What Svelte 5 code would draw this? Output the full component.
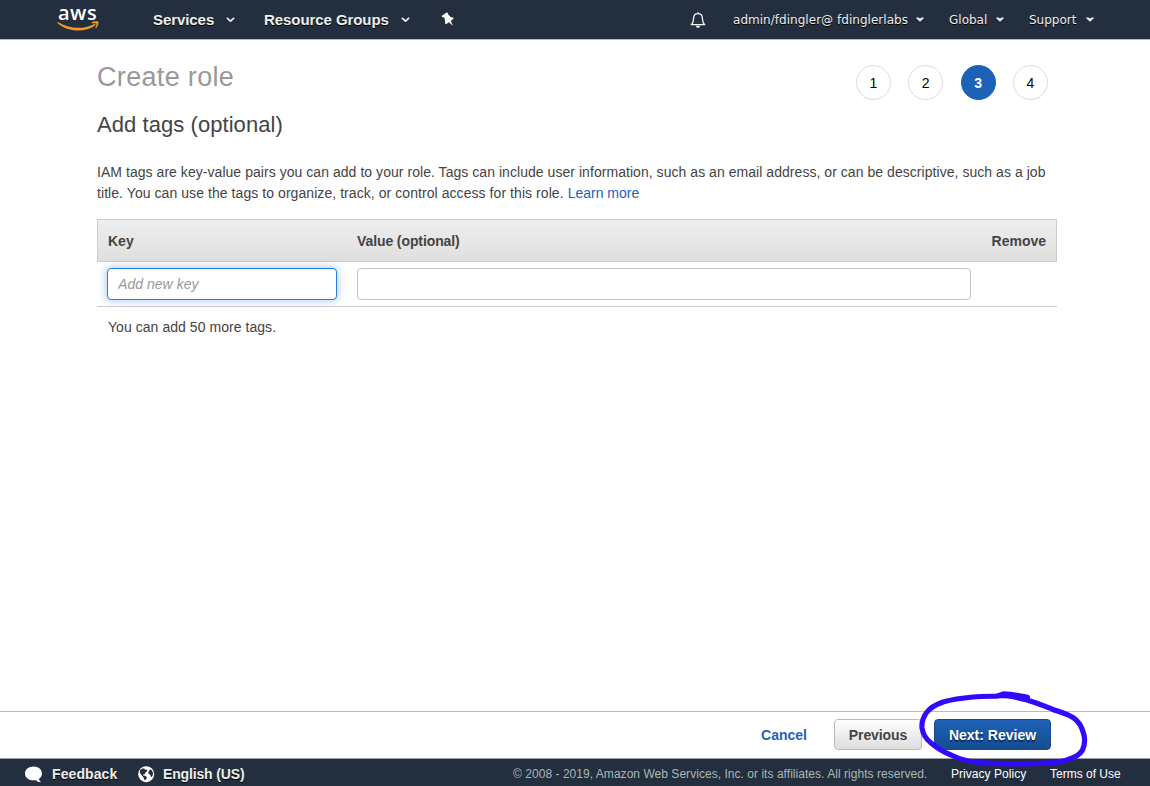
<script>
  const steps = [1, 2, 3, 4];
  const current = 3;
  let key = $state('');
  let value = $state('');
</script>

{#snippet caret(width)}
  <svg class="caret" {width} height={width * 0.6} viewBox="0 0 10 6">
    <path d="M1 1 L5 4.6 L9 1" fill="none" stroke="#eee" stroke-width="1.9" />
  </svg>
{/snippet}

{#snippet smallCaret()}
  <svg class="caret" width="8" height="5" viewBox="0 0 8 5">
    <path d="M0.2 0.4 H2.2 L4 1.5 L5.8 0.4 H7.8 V1.2 L4 4.8 L0.2 1.2Z" fill="#eee" />
  </svg>
{/snippet}

<div class="page">
  <header>
    <a class="logo" href="#home" aria-label="aws">
      <span>aws</span>
      <svg width="43" height="12" viewBox="0 0 43 12">
        <path d="M1 2 C11 8.6 26 9.9 37 4.2 C38.2 3.7 39 4.8 38.1 5.5 C28 13 10.5 12 0.7 3.2 C0.1 2.5 0.4 1.6 1 2Z" fill="#f7981f" />
        <path d="M34.8 2.3 C37.2 0.8 41 1 41.4 1.7 C41.8 2.6 41 6.5 39 8.2 C38.6 8.4 38.1 8.2 38.3 7.8 C39 6.2 39.8 4.4 39.4 3.7 C38.9 3 36.8 3.2 35.1 3.3 C34.5 3.3 34.3 2.7 34.8 2.3Z" fill="#f7981f" />
      </svg>
    </a>
    <nav class="main">
      <span class="services">Services {@render caret(9)}</span>
      <span class="groups">Resource Groups {@render caret(9)}</span>
      <svg class="pin" width="13" height="15" viewBox="0 0 13 15">
        <path d="M5.6 0.4 L7 0.9 L7.2 2.4 L10 5.3 L12.3 5.4 L12.6 6.6 L9.8 9 L11.8 13.7 L7.9 10.2 L5.4 12 L4.2 11.7 L4.1 9.4 L3.4 5.5 L1.2 5.2 L0.8 3.8Z" fill="#fff" />
      </svg>
    </nav>
    <nav class="account">
      <svg class="bell" width="16" height="18" viewBox="0 0 16 18">
        <path d="M8 1.2 V2.7 M1.3 13.7 C3.2 12 3.5 10.2 3.6 7.4 C3.7 4.4 5.4 2.7 8 2.7 C10.6 2.7 12.3 4.4 12.4 7.4 C12.5 10.2 12.8 12 14.7 13.7Z" fill="none" stroke="#f4f4f4" stroke-width="1.3" stroke-linejoin="round" />
        <path d="M5.7 14.8 H10.3 Q9.8 16.9 8 16.9 Q6.2 16.9 5.7 14.8Z" fill="#f4f4f4" />
      </svg>
      <span class="user">admin/fdingler@ fdinglerlabs {@render smallCaret()}</span>
      <span class="region">Global {@render smallCaret()}</span>
      <span class="support">Support {@render smallCaret()}</span>
    </nav>
  </header>

  <main>
    <div class="top">
      <div>
        <h1>Create role</h1>
        <h2>Add tags (optional)</h2>
      </div>
      <ol>
        {#each steps as step}
          <li class:active={step === current}>{step}</li>
        {/each}
      </ol>
    </div>
    <p class="intro">
      <span class="line one">IAM tags are key-value pairs you can add to your role. Tags can include user information, such as an email address, or can be descriptive, such as a job</span>
      <span class="line two">title. You can use the tags to organize, track, or control access for this role. <a href="#learn">Learn more</a></span>
    </p>
    <div class="table">
      <div class="head"><span>Key</span><span class="vh">Value (optional)</span><span class="rm">Remove</span></div>
      <div class="row">
        <input class="key" placeholder="Add new key" aria-label="Key" bind:value={key} />
        <input class="value" aria-label="Value" bind:value />
      </div>
      <div class="more">You can add 50 more tags.</div>
    </div>
  </main>

  <div class="actions">
    <a class="cancel" href="#cancel">Cancel</a>
    <button class="previous">Previous</button>
    <div class="nextwrap">
      <button class="next">Next: Review</button>
      <svg class="scribble" width="180" height="90" viewBox="910 684 180 90">
        <path d="M1027.5 697.3 C1019 696 1012 694 1004 693.8 C1001 694 1000 696 996 696.2 C988 696.3 980 696.3 973 697 C962 698 952 699.5 943 702 C935 705 930 708 927 712 C923 717 921.5 722 922 728 C923 735 926 739 931 743 C937 748 943 752 951 755 C961 760 972 762.5 984 763 C998 764 1013 764 1027 764 C1041 763 1055 764 1067 760 C1075 757 1080 755 1082.5 750 C1085 745 1085 740 1084 735 C1082 727 1079 721 1073 717.5 C1067 714 1060 712 1053 709.5 C1044 706 1036 702.5 1027 700 C1018 697.5 1010 695.5 1000 695.5" fill="none" stroke="#3209fd" stroke-width="5.2" stroke-linecap="round" stroke-linejoin="round" />
      </svg>
    </div>
  </div>

  <footer>
    <svg class="bubble" width="18" height="17" viewBox="0 0 18 17">
      <path d="M8.5 0.4 C13.5 0.4 17 3.3 17 7.3 C17 9.9 15.8 11.6 14 12.7 C14.2 14.2 15 15.3 16.3 16.2 C13.9 16.2 12 15.4 10.8 14.2 C5 15 0 12.3 0 7.4 C0 3.3 3.5 0.4 8.5 0.4Z" fill="#fff" />
    </svg>
    <span class="feedback">Feedback</span>
    <svg class="globe" width="17" height="17" viewBox="0 0 17 17">
      <circle cx="8.2" cy="8.2" r="8" fill="#fff" />
      <path d="M2.6 3.4 L4.6 2.6 L6.4 2.6 L6.9 3.8 L8.8 3.6 L9.3 4.9 L7.4 6.6 L6.4 8.6 L5 8.4 L5.2 9.6 L7.6 10.1 L9 11.6 L8 13.6 L6.8 14.4 L5.8 12 L4.3 9.9 L2.4 7.8 L1.8 5.2Z M12 3.4 L13.8 4.2 L15 6.8 L14.8 9.2 L13.3 11.2 L12.4 9.8 L12.2 8.4 L10.6 7.9 L10.4 6.1Z" fill="#232f3e" />
    </svg>
    <span class="language">English (US)</span>
    <span class="copy">© 2008 - 2019, Amazon Web Services, Inc. or its affiliates. All rights reserved.</span>
    <a class="privacy" href="#privacy">Privacy Policy</a>
    <a class="terms" href="#terms">Terms of Use</a>
  </footer>
</div>

<style>
  :global(body) { margin: 0; background: #fff; }
  .page { box-sizing: border-box; width: 1150px; height: 786px; display: flex; flex-direction: column; overflow: hidden; font: 14px/21px "Liberation Sans", Arial, sans-serif; color: #444; }
  .page *, .page *::before { box-sizing: border-box; }
  a { color: #1e62b8; text-decoration: none; }
  span { white-space: nowrap; }
  svg { flex: none; }
  header { flex: none; height: 40px; background: #232f3e; border-bottom: 1px solid #b9bdc1; display: flex; color: #eee; text-shadow: 0 1px 0 #000; }
  .logo { margin-left: 57px; width: 96px; display: flex; flex-direction: column; color: #fff; text-shadow: none; }
  .logo span { font: 600 20px/28px "Open Sans", sans-serif; letter-spacing: 0.5px; margin: -1px 0 -7px 1px; }
  .main { display: flex; align-items: center; height: 39px; font-size: 15px; font-weight: bold; letter-spacing: -0.07px; }
  .main span { display: flex; align-items: center; justify-content: space-between; }
  .services { width: 82px; margin-right: 29px; }
  .groups { width: 146px; margin-right: 31px; }
  .account { margin-left: auto; padding-right: 56px; display: flex; align-items: center; height: 39px; font: 12px/20px "DejaVu Sans", Verdana, sans-serif; }
  .account span { display: flex; align-items: center; justify-content: space-between; }
  .bell { margin-right: 27px; }
  .user { width: 191px; margin-right: 25px; letter-spacing: 0.03px; }
  .region { width: 55px; margin-right: 25px; }
  .support { width: 65px; }
  main { flex: 1; padding: 0 93px 0 97px; }
  .top { display: flex; justify-content: space-between; height: 122px; }
  h1, h2 { margin: 0; font-weight: normal; white-space: nowrap; }
  h1 { font-size: 27px; line-height: 32px; color: #999; padding-top: 21px; letter-spacing: 0.33px; }
  h2 { font-size: 22px; line-height: 28px; padding-top: 18px; letter-spacing: 0.06px; }
  ol { display: flex; list-style: none; margin: 25px 9px 0 0; padding: 0; gap: 17.4px; }
  li { width: 35px; height: 35px; border: 1px solid #ddd; border-radius: 50%; text-align: center; line-height: 34px; color: #000; }
  li.active { background: #1e62b8; border-color: #1e62b8; color: #fff; font-weight: bold; }
  .intro { margin: 0; height: 57px; }
  .line { display: block; }
  .one { letter-spacing: 0.047px; }
  .two { letter-spacing: 0.065px; }
  .two a { letter-spacing: 0; }
  .table { width: 960px; }
  .head { display: flex; align-items: center; height: 43px; border: 1px solid #ccc; background: linear-gradient(#eee, #dfdfdf); padding: 2px 10px 0; font-weight: bold; }
  .head span:first-child { width: 249px; }
  .vh { letter-spacing: -0.1px; }
  .rm { margin-left: auto; }
  .row { height: 45px; border-bottom: 1px solid #ccc; padding: 6px 10px; display: flex; gap: 20px; }
  input { height: 32px; border: 1px solid #c4c4c4; border-radius: 4px; padding: 0 10px; font: 14px "Liberation Sans", Arial, sans-serif; outline: none; }
  input::placeholder { color: #999; font-style: italic; opacity: 1; letter-spacing: 0.04px; }
  .key { width: 230px; border-color: #2a7de1; box-shadow: 0 0 8px rgba(42,125,225,.5); }
  .value { width: 614px; }
  .more { padding: 10px 11px; letter-spacing: 0.05px; }
  .actions { flex: none; height: 48px; border-top: 1px solid #bbb; display: flex; justify-content: flex-end; padding: 7px 99px 0 0; }
  .cancel { font-weight: bold; line-height: 33px; margin-right: 27px; white-space: nowrap; }
  button { height: 31px; padding: 1px 0 0; border-radius: 4px; font: bold 14px/29px "Liberation Sans", Arial, sans-serif; white-space: nowrap; }
  .previous { width: 88px; margin-right: 12px; border: 1px solid #bbb; color: #444; background: linear-gradient(#fff, #ddd); letter-spacing: -0.1px; }
  .nextwrap { position: relative; width: 117px; height: 31px; }
  .next { width: 117px; border: 1px solid #164a8b; color: #fff; background: linear-gradient(#1e62b8, #164d91); text-shadow: 0 2px 1px #0b2c57; }
  .scribble { position: absolute; left: -24px; top: -35px; z-index: 2; pointer-events: none; }
  footer { flex: none; height: 27px; background: #232f3e; display: flex; align-items: center; padding: 3px 0 0 25px; color: #eee; font-size: 12px; box-shadow: 0 -1px 0 #999ca2; }
  footer a { color: #fff; white-space: nowrap; }
  .feedback, .language { font-size: 14px; font-weight: bold; text-shadow: 0 1px 0 #000; }
  .feedback { width: 86px; margin-left: 9px; letter-spacing: 0.1px; }
  .language { width: 350px; margin-left: 8px; letter-spacing: -0.15px; }
  .copy { width: 438px; color: #aab7b8; letter-spacing: 0.038px; }
  .privacy { width: 99px; letter-spacing: 0.04px; }
</style>
